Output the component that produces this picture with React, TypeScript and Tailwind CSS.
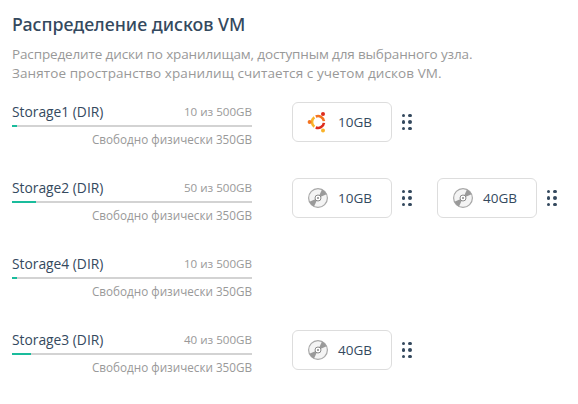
const rows = [
  { name: "Storage1 (DIR)", used: 10, disks: [{ size: "10GB", os: true }] },
  { name: "Storage2 (DIR)", used: 50, disks: [{ size: "10GB" }, { size: "40GB" }] },
  { name: "Storage4 (DIR)", used: 10, disks: [] },
  { name: "Storage3 (DIR)", used: 40, disks: [{ size: "40GB" }] },
] as { name: string; used: number; disks: { size: string; os?: boolean }[] }[];

function UbuntuIcon() {
  return (
    <svg width="22" height="22" viewBox="0 0 22 22">
      <path d="M8.75 5.44 A6 6 0 0 1 16.94 10.16" fill="none" stroke="#f47421" strokeWidth="2.6" />
      <path d="M16.94 11.84 A6 6 0 0 1 8.75 16.56" fill="none" stroke="#dd2c1e" strokeWidth="2.6" />
      <path d="M7.31 6.27 A6 6 0 0 0 7.31 15.73" fill="none" stroke="#f9b32a" strokeWidth="2.6" />
      <circle cx="2.6" cy="11" r="2" fill="#f47421" />
      <circle cx="16" cy="3" r="2" fill="#dd2c1e" />
      <circle cx="16" cy="19.4" r="2" fill="#f9b32a" />
    </svg>
  );
}

function DiscIcon() {
  return (
    <svg width="22" height="22" viewBox="0 0 22 22">
      <circle cx="11" cy="11" r="9.4" fill="#f4f4f4" stroke="#a8a8a8" strokeWidth="1.2" />
      <path d="M11 11 L15 2.5 A9.4 9.4 0 0 1 19.6 7.2 Z" fill="#9a9a9a" />
      <path d="M11 11 L7 19.5 A9.4 9.4 0 0 1 2.4 14.8 Z" fill="#9a9a9a" />
      <circle cx="11" cy="11" r="3" fill="#fff" stroke="#8a8a8a" strokeWidth="1" />
      <circle cx="11" cy="11" r="1" fill="#8a8a8a" />
    </svg>
  );
}

function Handle() {
  return (
    <div className="grid grid-cols-2 gap-[3.2px]">
      {[0, 1, 2, 3, 4, 5].map((i) => (
        <span key={i} className="size-[3.5px] rounded-full bg-[#34495e]" />
      ))}
    </div>
  );
}

export default function App() {
  return (
    <main className="w-[578px] h-[404px] bg-white px-3 pt-3 font-['Open_Sans',sans-serif] overflow-hidden">
      <h1 className="font-['Noto_Sans',sans-serif] text-[17.8px] leading-6 font-medium text-[#34495e]">Распределение дисков VM</h1>
      <p className="mt-[9px] text-[13.5px] leading-[19px] text-[#999]">
        <span className="tracking-[-0.14px]">Распределите диски по хранилищам, доступным для выбранного узла.</span>
        <br />
        <span className="tracking-[0.085px]">Занятое пространство хранилищ считается с учетом дисков VM.</span>
      </p>
      <div className="mt-[20px] flex flex-col">
        {rows.map((r) => (
          <div key={r.name} className="flex h-[76px] items-start">
            <div className="w-[240px] shrink-0">
              <div className="flex h-[18px] items-center justify-between">
                <span className="text-[13.8px] text-[#34495e]">{r.name}</span>
                <span className="text-[11.6px] text-[#999]">{r.used} из 500GB</span>
              </div>
              <div className="mt-1 h-0.5 bg-[#d3d3d3]">
                <div className="h-0.5 bg-[#1abc9c]" style={{ width: `${(r.used / 500) * 100}%` }} />
              </div>
              <div className="mt-1 text-right text-[11.7px] leading-4 text-[#999]">Свободно физически 350GB</div>
            </div>
            <div className="-mt-px ml-10 flex">
              {r.disks.map((d, i) => (
                <div key={i} className="flex w-[145px] items-center">
                  <div className="flex h-10 w-[100px] items-center gap-[9px] rounded-md border border-[#ddd] pl-[14px]">
                    {d.os ? <UbuntuIcon /> : <DiscIcon />}
                    <span className="text-[13.5px] text-[#34495e]">{d.size}</span>
                  </div>
                  <div className="ml-[9.5px]">
                    <Handle />
                  </div>
                </div>
              ))}
            </div>
          </div>
        ))}
      </div>
    </main>
  );
}
